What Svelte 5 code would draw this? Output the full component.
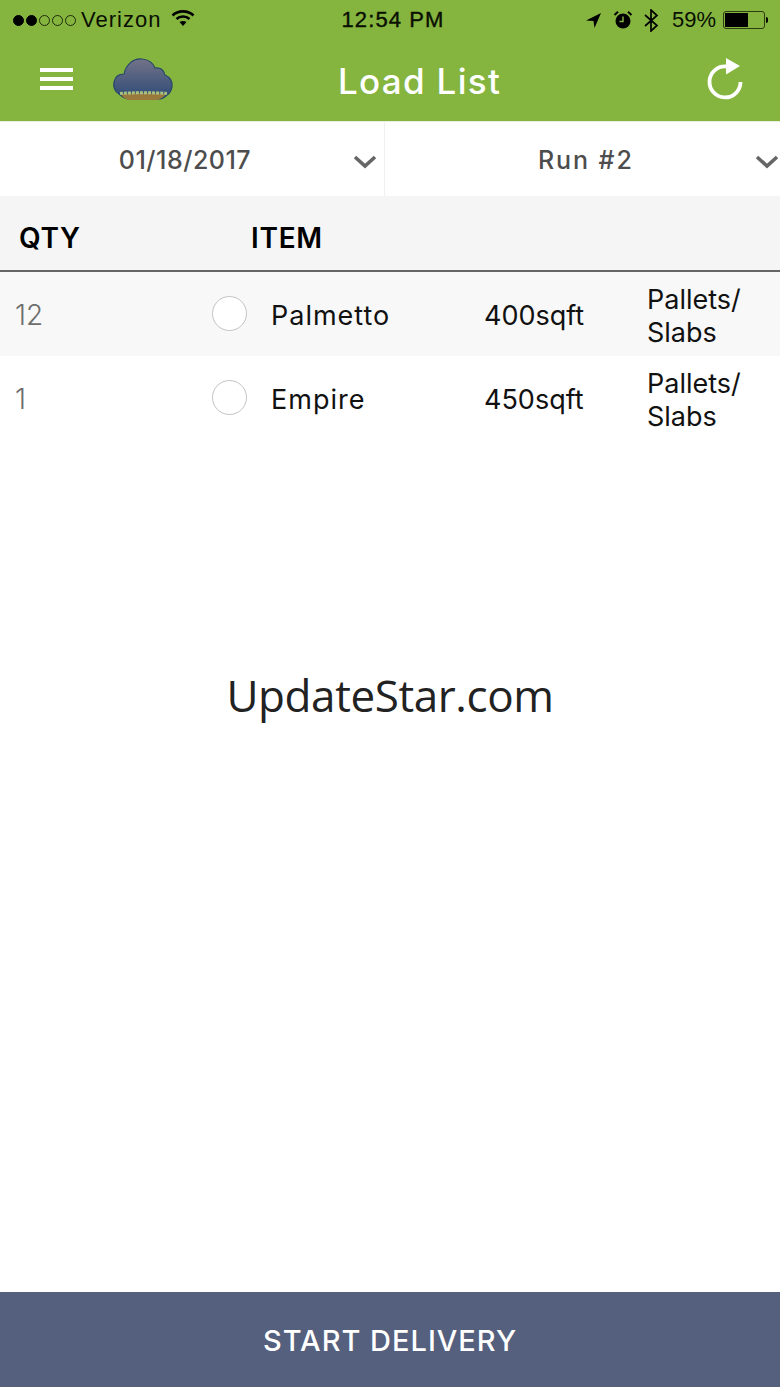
<script>
  const rows = [
    { qty: '12', name: 'Palmetto', area: '400sqft', shaded: true },
    { qty: '1', name: 'Empire', area: '450sqft', shaded: false }
  ];
</script>

<div class="page">
  <header class="top">
    <div class="status">
      <div class="s-left">
        <span class="dots"><i class="on"></i><i class="on"></i><i></i><i></i><i></i></span>
        <span class="carrier">Verizon</span>
        <svg class="wifi" width="24" height="18" viewBox="0 0 24 18"><path d="M1.500 6.500C7 1 17 1 22.500 6.500" fill="none" stroke="#000" stroke-width="2.600"/><path d="M5.500 10C9 6.700 15 6.700 18.500 10" fill="none" stroke="#000" stroke-width="2.600"/><path d="M8.500 13C10.500 11.500 13.500 11.500 15.500 13L12 17Z" fill="#000"/></svg>
      </div>
      <div class="s-time">12:54 PM</div>
      <div class="s-right">
        <svg width="17" height="17" viewBox="0 0 17 17"><path d="M16 1 1 8.500 8.500 9 9.500 16Z" fill="#000"/></svg>
        <svg width="20" height="20" viewBox="0 0 20 20"><circle cx="10" cy="11" r="7.500" fill="#000"/><path d="M10 6.500V11.500H6.500" fill="none" stroke="#85b53f" stroke-width="1.500"/><path d="M1.500 5 5 1.800M18.500 5 15 1.800" stroke="#000" stroke-width="2"/></svg>
        <svg width="16" height="23" viewBox="0 0 16 23"><path d="M2 6 14 16.500 8 22V1L14 6.500 2 17" fill="none" stroke="#000" stroke-width="1.700"/></svg>
        <span class="pct">59%</span>
        <span class="battery"><span class="fill"></span></span><span class="nub"></span>
      </div>
    </div>
    <div class="nav">
      <div class="nav-left">
        <span class="burger"><i></i><i></i><i></i></span>
        <svg class="cloud" width="62" height="46" viewBox="0 0 62 46">
          <defs>
            <linearGradient id="sky" x1="0" y1="0" x2="0" y2="1"><stop offset="0" stop-color="#747389"/><stop offset="1" stop-color="#2c4a75"/></linearGradient>
          </defs>
          <path d="M16 43C12 42 9 40 7 38 3 36 1 31 2 26 3 21 7 18 12 18 14 8 22 2 30 3 36 3.500 41 7 43 12 48 11 52 14 53 19 58 21 61 26 60 31 59 36 57 38 55 39 53 41 50 43 46 43Z" fill="url(#sky)" stroke="#24466b" stroke-width="1.200"/>
          <path d="M9 38C20 37 42 37 54 38 52 41 49 43 45 44H17C13 43 10 41 9 38Z" fill="#9a7a3c"/>
          <path d="M8 37.500C20 36.500 42 36.500 55 37.500" fill="none" stroke="#a9c27f" stroke-width="3" stroke-dasharray="3 1"/>
        </svg>
      </div>
      <h1>Load List</h1>
      <svg class="refresh" width="38" height="42" viewBox="0 0 38 42">
        <path d="M19 8.500A15.500 15.500 0 1 0 33.500 24" fill="none" stroke="#fff" stroke-width="3.800"/>
        <path d="M19 0 33 8 19 16.500Z" fill="#fff"/>
      </svg>
    </div>
  </header>

  <section class="filters">
    <div class="filter date">
      <span class="label">01/18/2017</span>
      <svg class="chev" width="24" height="14" viewBox="0 0 24 14"><path d="M2 2 12 11 22 2" fill="none" stroke="#666" stroke-width="3.600"/></svg>
    </div>
    <div class="filter run">
      <span class="label">Run #2</span>
      <svg class="chev" width="24" height="14" viewBox="0 0 24 14"><path d="M2 2 12 11 22 2" fill="none" stroke="#666" stroke-width="3.600"/></svg>
    </div>
  </section>

  <div class="thead">
    <span class="th-qty">QTY</span>
    <span class="th-item">ITEM</span>
  </div>

  <main class="list">
    {#each rows as r}
      <div class="row" class:shaded={r.shaded}>
        <span class="qty">{r.qty}</span>
        <span class="radio"></span>
        <span class="name">{r.name}</span>
        <span class="area">{r.area}</span>
        <span class="kind">Pallets/<br />Slabs</span>
      </div>
    {/each}
  </main>

  <div class="mark">UpdateStar.com</div>

  <footer class="cta">START DELIVERY</footer>
</div>

<style>
  :global(body) { margin: 0; background: #fff; }
  .page {
    position: relative;
    width: 780px;
    height: 1387px;
    display: flex;
    flex-direction: column;
    overflow: hidden;
    font-family: Inter, "Noto Sans", sans-serif;
    background: #fff;
  }
  .top { background: #85b53f; height: 121px; flex: none; border-bottom: 1px solid #e8eddd; }
  .status {
    height: 40px;
    display: grid;
    grid-template-columns: 1fr auto 1fr;
    align-items: center;
    font-family: "Liberation Sans", Arial, sans-serif;
    font-size: 22px;
    color: #0a0f02;
  }
  .s-left { display: flex; align-items: center; padding-left: 13px; }
  .dots { display: flex; gap: 2px; margin-right: 5px; }
  .dots i { width: 9px; height: 9px; border: 1px solid #1c2a08; border-radius: 50%; box-sizing: content-box; }
  .dots i.on { background: #000; border-color: #000; }
  .carrier { letter-spacing: 1px; }
  .wifi { margin-left: 10px; margin-top: -4px; }
  .s-time { letter-spacing: 1.1px; padding-left: 6px; -webkit-text-stroke: 0.4px #0a0f02; }
  .s-right { display: flex; align-items: center; justify-content: flex-end; padding-right: 12px; gap: 0; }
  .s-right svg:nth-child(1) { margin-right: 11px; }
  .s-right svg:nth-child(2) { margin-right: 10px; }
  .s-right svg:nth-child(3) { margin-right: 13px; }
  .pct { margin-right: 7px; }
  .battery {
    width: 38px;
    height: 14px;
    border: 1px solid #2c3d12;
    border-radius: 3px;
    padding: 1px;
    display: block;
    box-sizing: content-box;
  }
  .fill { display: block; width: 23px; height: 14px; background: #000; }
  .nub { width: 2px; height: 6px; background: #000; margin-left: 1px; border-radius: 0 2px 2px 0; }
  .nav {
    height: 81px;
    position: relative;
    display: flex;
    align-items: center;
    justify-content: space-between;
    padding: 0 36px 0 40px;
  }
  .nav-left { display: flex; align-items: center; gap: 40px; }
  .burger { display: flex; flex-direction: column; gap: 5px; margin-top: -3px; }
  .burger i { display: block; width: 33px; height: 4px; background: #fff; }
  .cloud { margin-top: -4px; margin-left: -1px; }
  h1 {
    margin: 0;
    position: absolute;
    left: 338px;
    top: 19px;
    font-size: 35px;
    line-height: 44px;
    font-weight: 500;
    color: #fff;
    letter-spacing: 1.3px;
  }
  .refresh { margin-top: -4px; margin-right: -1px; }
  .filters { height: 74px; flex: none; display: flex; background: #fff; }
  .filter { position: relative; display: flex; align-items: center; justify-content: center; font-size: 25px; color: #4d4d4d; font-weight: 500; }
  .label { padding-top: 2px; }
  .date { width: 385px; padding-right: 14px; box-sizing: border-box; border-right: 1px solid #f0f0f0; letter-spacing: 0.5px; }
  .run { flex: 1; padding-right: 0; justify-content: flex-start; padding-left: 153px; letter-spacing: 1.9px; }
  .chev { position: absolute; right: 7px; top: 33px; }
  .run .chev { right: 1px; }
  .thead {
    flex: none;
    background: #f5f5f5;
    border-bottom: 2px solid #666;
    display: flex;
    align-items: center;
    font-size: 28px;
    font-weight: 600;
    color: #000;
    padding-left: 19px;
    padding-top: 10px;
    box-sizing: content-box;
    height: 64px;
    letter-spacing: 0.7px;
  }
  .th-qty { width: 232px; }
  .list { flex: 1; }
  .row { height: 84px; display: flex; align-items: center; font-size: 27px; color: #111; }
  .shaded { background: #f8f8f8; }
  .qty { width: 197px; padding-left: 15px; padding-top: 2px; box-sizing: content-box; font-size: 28px; color: #6d6d6d; font-weight: 300; flex: none; }
  .radio {
    width: 33px;
    height: 33px;
    flex: none;
    border: 1px solid #c4c4c4;
    border-radius: 50%;
    background: #fff;
    margin-top: -1px;
  }
  .name { margin-left: 24px; width: 213px; flex: none; letter-spacing: 1px; padding-top: 2px; }
  .area { width: 163px; flex: none; padding-top: 2px; }
  .kind { line-height: 33px; padding-top: 4px; }
  .mark {
    position: absolute;
    left: 0;
    right: 0;
    top: 665px;
    text-align: center;
    font-family: "Open Sans", sans-serif;
    font-size: 44px;
    line-height: 60px;
    color: #222;
    letter-spacing: -0.4px;
  }
  .cta {
    height: 95px;
    flex: none;
    background: #555f7e;
    color: #fff;
    display: flex;
    align-items: center;
    justify-content: center;
    font-size: 29px;
    font-weight: 500;
    letter-spacing: 1px;
    padding-top: 2px;
    box-sizing: border-box;
  }
</style>
